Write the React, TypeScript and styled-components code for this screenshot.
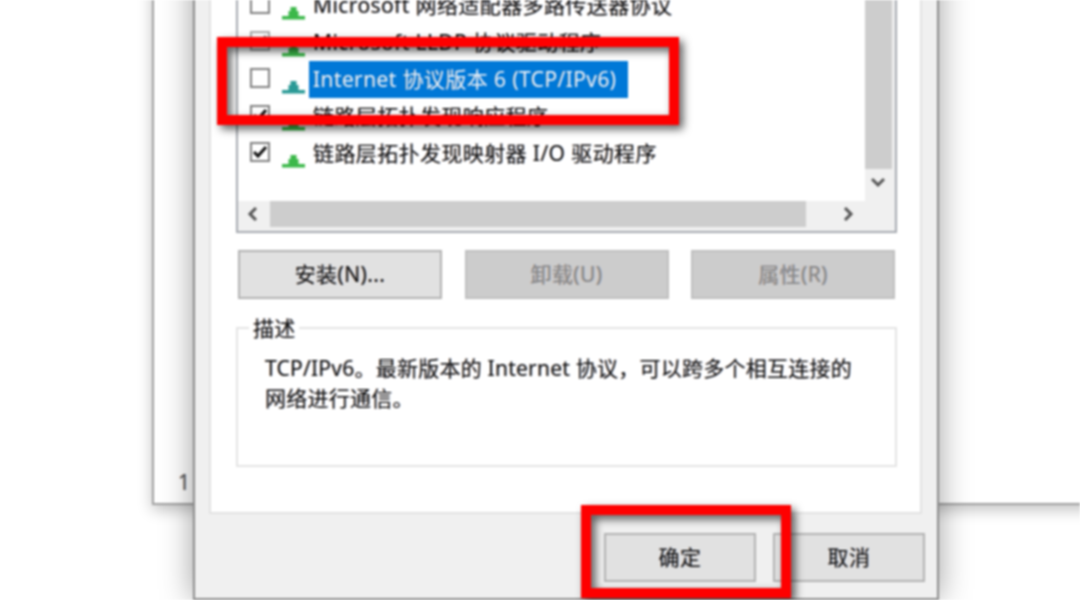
import React from 'react';
import styled, { createGlobalStyle } from 'styled-components';

const GlobalStyle = createGlobalStyle`
  html, body { margin: 0; padding: 0; background: #fff; }
  body { font-family: "Noto Sans", "Noto Sans CJK SC", sans-serif; }
`;

const Stage = styled.div`
  position: relative;
  width: 1080px;
  height: 600px;
  overflow: hidden;
  background: #fff;
  filter: blur(0.85px);
  color: #111;
  font-size: 21px;
  letter-spacing: 0.4px;
  text-shadow: 0.7px 0 rgba(0, 110, 255, 0.3), -0.7px 0 rgba(255, 120, 0, 0.3);
`;

const BackWindow = styled.div`
  position: absolute;
  left: 152px;
  top: -20px;
  right: -20px;
  height: 525px;
  box-sizing: border-box;
  display: flex;
  align-items: flex-end;
  padding: 0 0 7px 24px;
  background: #fff;
  border: 2px solid #a0a0a0;
  box-shadow: 0 5px 14px rgba(0, 0, 0, 0.24);
  color: #555;
`;

const Dialog = styled.div`
  position: absolute;
  left: 193px;
  top: -60px;
  width: 746px;
  height: 660px;
  box-sizing: border-box;
  padding: 18px 0 0 14px;
  background: #f0f0f0;
  border: 2px solid #8c8c8c;
  box-shadow: 0 0 30px rgba(0, 0, 0, 0.38);
`;

const TabPanel = styled.div`
  width: 713px;
  height: 554px;
  box-sizing: border-box;
  padding: 23px 23px 0 25px;
  background: #fff;
  border: 2px solid #e2e2e2;
`;

const ListBox = styled.div`
  display: grid;
  grid-template-columns: 1fr 30px;
  grid-template-rows: 214px 30px;
  box-sizing: border-box;
  width: 661px;
  height: 248px;
  background: #fff;
  border: 2px solid #a6aab0;
`;

const Rows = styled.div`
  overflow: hidden;
  padding-left: 12px;
`;

const Row = styled.div`
  display: flex;
  align-items: center;
  height: 37px;
  white-space: nowrap;
`;

const CheckBox = styled.span<{ $muted?: boolean }>`
  display: flex;
  align-items: center;
  justify-content: center;
  flex: none;
  width: 20px;
  height: 20px;
  box-sizing: border-box;
  margin-top: -4px;
  background: #fff;
  border: 2px solid ${p => (p.$muted ? '#a8a8a8' : '#808080')};
  color: ${p => (p.$muted ? '#8a8a8a' : '#111')};
`;

const NetIcon = styled.svg`
  flex: none;
  width: 23px;
  height: 14px;
  margin: 14px 0 0 12px;
`;

const RowLabel = styled.span<{ $selected?: boolean }>`
  display: flex;
  align-items: center;
  height: 37px;
  box-sizing: border-box;
  margin-left: 4px;
  padding: 0 11px 3px 4px;
  background: ${p => (p.$selected ? '#0078d7' : 'transparent')};
  color: ${p => (p.$selected ? '#e8f3fc' : '#111')};
`;

const VerticalBar = styled.div`
  display: flex;
  flex-direction: column;
  background: #f0f0f0;
`;

const VerticalThumb = styled.div`
  width: 27px;
  height: 182px;
  background: #cdcdcd;
`;

const HorizontalBar = styled.div`
  grid-column: 1 / 3;
  display: flex;
  align-items: flex-start;
  background: #f0f0f0;
`;

const HorizontalThumb = styled.div`
  width: 536px;
  height: 26px;
  margin-left: 2px;
  background: #cdcdcd;
`;

const ArrowBox = styled.span<{ $wide?: boolean; $endGap?: number }>`
  display: flex;
  align-items: center;
  justify-content: center;
  flex: ${p => (p.$wide ? '1' : 'none')};
  width: ${p => (p.$wide ? 'auto' : '30px')};
  height: 26px;
  box-sizing: border-box;
  padding-right: ${p => p.$endGap ?? 0}px;
  color: #555;
`;

const Arrow = styled.svg`
  width: 14px;
  height: 14px;
  fill: none;
  stroke: currentColor;
  stroke-width: 3;
`;

const ActionRow = styled.div`
  display: flex;
  justify-content: space-between;
  width: 661px;
  box-sizing: border-box;
  margin-top: 17px;
  padding: 0 2px;
`;

const Button = styled.button<{ $disabled?: boolean; $width?: number }>`
  width: ${p => p.$width ?? 204}px;
  height: 49px;
  padding: 0 0 4px;
  font: inherit;
  letter-spacing: inherit;
  text-shadow: inherit;
  background: ${p => (p.$disabled ? '#cccccc' : '#e1e1e1')};
  border: 2px solid ${p => (p.$disabled ? '#bfbfbf' : '#b2b2b2')};
  color: ${p => (p.$disabled ? '#888888' : '#111')};
`;

const GroupBox = styled.div`
  position: relative;
  box-sizing: border-box;
  width: 661px;
  height: 140px;
  margin-top: 28px;
  padding: 24px 30px 0 27px;
  border: 2px solid #e4e4e4;
  line-height: 30px;
  letter-spacing: 0.24px;
`;

const GroupLegend = styled.span`
  position: absolute;
  left: 11px;
  top: -15px;
  padding: 0 4px;
  line-height: 28px;
  background: #fff;
`;

const Footer = styled.div`
  display: flex;
  justify-content: flex-end;
  gap: 17px;
  width: 730px;
  box-sizing: border-box;
  margin-top: 19px;
  padding-right: 14px;
`;

const Annotation = styled.div<{ $left: number; $top: number; $w: number; $h: number }>`
  position: absolute;
  left: ${p => p.$left}px;
  top: ${p => p.$top}px;
  width: ${p => p.$w}px;
  height: ${p => p.$h}px;
  box-sizing: border-box;
  border: 10px solid #fe0000;
  filter: drop-shadow(4px 4px 4px rgba(0, 0, 0, 0.65));
`;

function Network({ selected }: { selected?: boolean }) {
  const color = selected ? '#2a9a96' : '#3cb84a';
  return (
    <NetIcon viewBox="0 0 23 14">
      <path d="M8.5 1h6v4h2v5h-10V5h2z" fill={color} />
      <rect x="0" y="10" width="23" height="3.5" fill={color} />
    </NetIcon>
  );
}

function Tick() {
  return (
    <svg width="16" height="16" viewBox="0 0 16 16">
      <path d="M2 8l4 4 8-9" fill="none" stroke="currentColor" strokeWidth="3" />
    </svg>
  );
}

const rows = [
  { label: 'Microsoft 网络适配器多路传送器协议' },
  { label: 'Microsoft LLDP 协议驱动程序', checked: true, muted: true },
  { label: 'Internet 协议版本 6 (TCP/IPv6)', selected: true },
  { label: '链路层拓扑发现响应程序', checked: true },
  { label: '链路层拓扑发现映射器 I/O 驱动程序', checked: true },
];

export default function App() {
  return (
    <Stage>
      <GlobalStyle />
      <BackWindow>1</BackWindow>
      <Dialog>
        <TabPanel>
          <ListBox>
            <Rows>
              {rows.map(row => (
                <Row key={row.label}>
                  <CheckBox $muted={row.muted}>{row.checked && <Tick />}</CheckBox>
                  <Network selected={row.selected} />
                  <RowLabel $selected={row.selected}>{row.label}</RowLabel>
                </Row>
              ))}
            </Rows>
            <VerticalBar>
              <VerticalThumb />
              <ArrowBox $endGap={4}>
                <Arrow viewBox="0 0 14 14">
                  <path d="M1 4l6 6 6-6" />
                </Arrow>
              </ArrowBox>
            </VerticalBar>
            <HorizontalBar>
              <ArrowBox>
                <Arrow viewBox="0 0 14 14">
                  <path d="M10 1L4 7l6 6" />
                </Arrow>
              </ArrowBox>
              <HorizontalThumb />
              <ArrowBox $wide $endGap={5}>
                <Arrow viewBox="0 0 14 14">
                  <path d="M4 1l6 6-6 6" />
                </Arrow>
              </ArrowBox>
            </HorizontalBar>
          </ListBox>
          <ActionRow>
            <Button>安装(N)...</Button>
            <Button $disabled>卸载(U)</Button>
            <Button $disabled>属性(R)</Button>
          </ActionRow>
          <GroupBox>
            <GroupLegend>描述</GroupLegend>
            TCP/IPv6。最新版本的 Internet 协议，可以跨多个相互连接的网络进行通信。
          </GroupBox>
        </TabPanel>
        <Footer>
          <Button $width={152}>确定</Button>
          <Button $width={152}>取消</Button>
        </Footer>
      </Dialog>
      <Annotation $left={217} $top={37} $w={462} $h={88} />
      <Annotation $left={581} $top={505} $w={210} $h={93} />
    </Stage>
  );
}
